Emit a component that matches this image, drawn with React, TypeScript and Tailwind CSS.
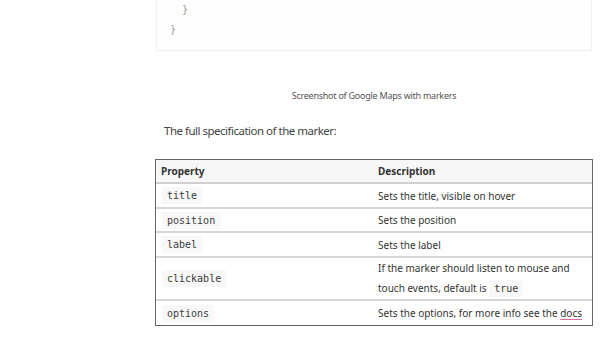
const rows = [
  { prop: "title", desc: <>Sets the title, visible on hover</>, h: "h-[25px]" },
  { prop: "position", desc: <>Sets the position</>, h: "h-[24px]" },
  { prop: "label", desc: <>Sets the label</>, h: "h-[25px]" },
  {
    prop: "clickable",
    desc: (
      <>
        If the marker should listen to mouse and
        <br />
        touch events, default is <Code>true</Code>
      </>
    ),
    h: "h-[43px]",
  },
  {
    prop: "options",
    desc: (
      <>
        Sets the options, for more info see the{" "}
        <span className="underline decoration-[#e06b9c] underline-offset-2">docs</span>
      </>
    ),
    h: "h-[24px]",
  },
];

function Code({ children }: { children: React.ReactNode }) {
  return (
    <span className="bg-[#f8f8f8] px-[5px] py-[3px] font-['DejaVu_Sans_Mono',monospace] text-[10px] text-[#3a3a3a]">
      {children}
    </span>
  );
}

export default function App() {
  return (
    <div className="w-[600px] h-[338px] bg-white overflow-hidden font-['Noto_Sans',sans-serif]">
      <div className="ml-[156px] w-[436px]">
        {/* tail of the code block */}
        <div className="border border-t-0 border-[#f0f0f0] bg-[#fefefe] pl-[13px] pb-[10px] font-['DejaVu_Sans_Mono',monospace] text-[10px] leading-[20px] text-[#999] whitespace-pre">
          <div>{"  }"}</div>
          <div>{"}"}</div>
        </div>

        <p className="mt-[38px] text-center text-[9px] tracking-[-0.25px] leading-[14px] text-[#555]">
          Screenshot of Google Maps with markers
        </p>

        <p className="mt-[19px] pl-[8px] text-[11.5px] tracking-[-0.5px] leading-[18px] text-[#444]">
          The full specification of the marker:
        </p>

        <div className="-mx-px mt-[19px] border border-[#666] text-[10px] text-[#333]">
          <div className="flex h-[24px] items-center bg-[#f7f7f7] border-b-2 border-[#cfcfcf] font-bold">
            <div className="w-[217px] pl-[5px]">Property</div>
            <div className="pl-[5px]">Description</div>
          </div>
          {rows.map((r, i) => (
            <div
              key={r.prop}
              className={`flex items-center ${r.h} ${i < rows.length - 1 ? "border-b-2 border-[#d6d6d6]" : ""}`}
            >
              <div className="w-[217px] pl-[6px]">
                <Code>{r.prop}</Code>
              </div>
              <div className="pl-[5px] leading-[20px]">{r.desc}</div>
            </div>
          ))}
        </div>
      </div>
    </div>
  );
}
